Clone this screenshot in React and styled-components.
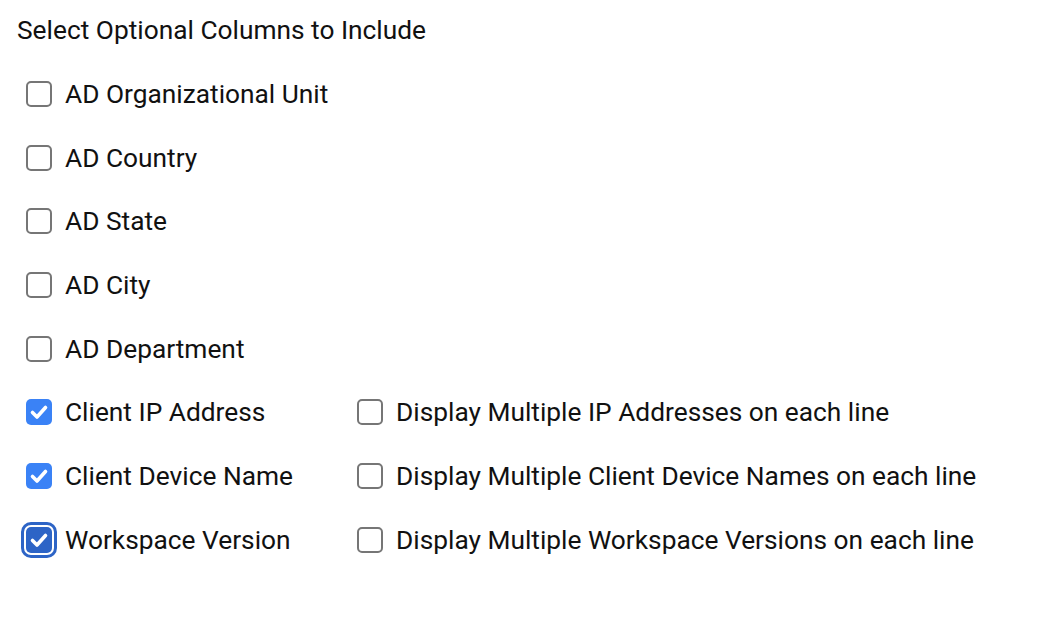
import React from 'react';
import styled, { createGlobalStyle } from 'styled-components';

const GlobalStyle = createGlobalStyle`
    body {
        margin: 0;
        background: #fff;
        font-family: Roboto, "Liberation Sans", sans-serif;
        color: #111;
    }
`;

const columnas = [
    { label: 'AD Organizational Unit' },
    { label: 'AD Country' },
    { label: 'AD State' },
    { label: 'AD City' },
    { label: 'AD Department' },
    { label: 'Client IP Address', checked: true, extra: 'Display Multiple IP Addresses on each line' },
    { label: 'Client Device Name', checked: true, extra: 'Display Multiple Client Device Names on each line' },
    { label: 'Workspace Version', checked: true, focused: true, extra: 'Display Multiple Workspace Versions on each line' },
];

function Check({ checked, focused }) {
    return (
        <Caja $checked={checked} $focused={focused}>
            {checked && (
                <svg viewBox="0 0 26 26" width="26" height="26">
                    <path d="M6.5 13.5 L11 18 L19.5 8.5" fill="none" stroke="#fff" strokeWidth="3.6" strokeLinecap="round" strokeLinejoin="round" />
                </svg>
            )}
        </Caja>
    );
}

export default function App() {
    return (
        <>
            <GlobalStyle />
            <Contenedor>
                <Titulo>Select Optional Columns to Include</Titulo>
                <Lista>
                    {columnas.map((c) => (
                        <Fila key={c.label}>
                            <Opcion>
                                <Check checked={c.checked} focused={c.focused} />
                                <span>{c.label}</span>
                            </Opcion>
                            {c.extra && (
                                <Opcion>
                                    <Check />
                                    <span>{c.extra}</span>
                                </Opcion>
                            )}
                        </Fila>
                    ))}
                </Lista>
            </Contenedor>
        </>
    );
}

const Contenedor = styled.div`
    padding: 15px 0 0 17px;
`;

const Titulo = styled.h1`
    margin: 0;
    font-size: 26.3px;
    font-weight: 400;
    line-height: 30px;
    color: #111;
`;

const Lista = styled.div`
    display: flex;
    flex-direction: column;
    margin-top: 17px;
    padding-left: 9px;
`;

const Fila = styled.div`
    display: grid;
    grid-template-columns: 331px 1fr;
    align-items: center;
    height: 63.7px;
`;

const Opcion = styled.label`
    display: flex;
    align-items: center;
    gap: 13px;
    font-size: 26.3px;
    color: #111;
    white-space: nowrap;
`;

const Caja = styled.span`
    box-sizing: border-box;
    width: 26px;
    height: 26px;
    flex: none;
    border-radius: 5px;
    border: ${(p) => (p.$checked ? 'none' : '2px solid #767676')};
    background: ${(p) => (p.$checked ? (p.$focused ? '#2d64c6' : '#3a82f6') : '#fff')};
    outline: ${(p) => (p.$focused ? '3px solid #2d64c6' : 'none')};
    outline-offset: 2px;
    display: flex;
    align-items: center;
    justify-content: center;

    svg {
        display: block;
    }
`;
